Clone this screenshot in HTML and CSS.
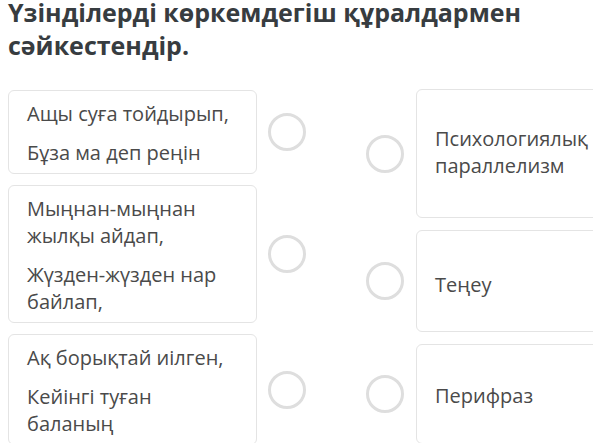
FILE: index.html
```html
<!DOCTYPE html>
<html lang="kk">
<head>
<meta charset="utf-8">
<title>Сәйкестендір</title>
<link rel="stylesheet" href="styles.css">
</head>
<body>
<main class="page">
  <h1 class="title"><span class="title-line">Үзінділерді көркемдегіш құралдармен</span> <span class="title-line">сәйкестендір.</span></h1>
  <div class="match">
    <div class="col col-left">
      <div class="row">
        <div class="card card-left">
          <p>Ащы суға тойдырып,</p>
          <p>Бұза ма деп реңін</p>
        </div>
        <span class="dot"></span>
      </div>
      <div class="row">
        <div class="card card-left">
          <p>Мыңнан-мыңнан жылқы айдап,</p>
          <p>Жүзден-жүзден нар байлап,</p>
        </div>
        <span class="dot"></span>
      </div>
      <div class="row">
        <div class="card card-left">
          <p>Ақ борықтай иілген,</p>
          <p>Кейінгі туған баланың</p>
        </div>
        <span class="dot"></span>
      </div>
    </div>
    <div class="col col-right">
      <div class="row">
        <span class="dot"></span>
        <div class="card card-right card-r1">
          <p>Психологиялық параллелизм</p>
        </div>
      </div>
      <div class="row">
        <span class="dot"></span>
        <div class="card card-right card-r2">
          <p>Теңеу</p>
        </div>
      </div>
      <div class="row">
        <span class="dot"></span>
        <div class="card card-right card-r3">
          <p>Перифраз</p>
        </div>
      </div>
    </div>
  </div>
</main>
</body>
</html>
```

FILE: styles.css
```css
html, body {
  margin: 0;
  padding: 0;
  background: #ffffff;
  overflow: hidden;
}

body {
  font-family: "Open Sans", "Noto Sans", sans-serif;
  color: #4a4a4a;
}

.page {
  padding: 0 0 0 8px;
  width: 700px;
}

.title {
  margin: 0 0 33px 0;
  font-size: 25px;
  font-weight: 700;
  color: #373c40;
  width: 570px;
}

.title-line {
  display: block;
  line-height: 24px;
}

.title-line + .title-line {
  margin-top: 9px;
}

.match {
  display: flex;
  align-items: flex-start;
  gap: 60px;
}

.col {
  display: flex;
  flex-direction: column;
}

.col-left {
  gap: 11px;
}

.col-right {
  gap: 12px;
  margin-top: -1px;
}

.row {
  display: flex;
  align-items: center;
  gap: 11px;
}

.col-right .row {
  gap: 12px;
}

.card {
  box-sizing: border-box;
  border: 1px solid #e4e4e4;
  border-radius: 6px;
  background: #fff;
  font-size: 20px;
  line-height: 27px;
}

.card p {
  margin: 0;
}

.card-left {
  width: 249px;
  padding: 9px 16px 7px 18px;
}

.card-left p + p {
  margin-top: 12px;
}

.card-right {
  width: 200px;
  padding: 0 18px;
  display: flex;
  align-items: center;
}

.card-r1 { height: 129px; padding-bottom: 4px; }
.card-r2 { height: 102px; padding-top: 6px; }
.card-r3 { height: 100px; padding-top: 2px; }

.dot {
  flex: none;
  box-sizing: border-box;
  width: 38px;
  height: 38px;
  border: 3px solid #dedede;
  border-radius: 50%;
}
```
